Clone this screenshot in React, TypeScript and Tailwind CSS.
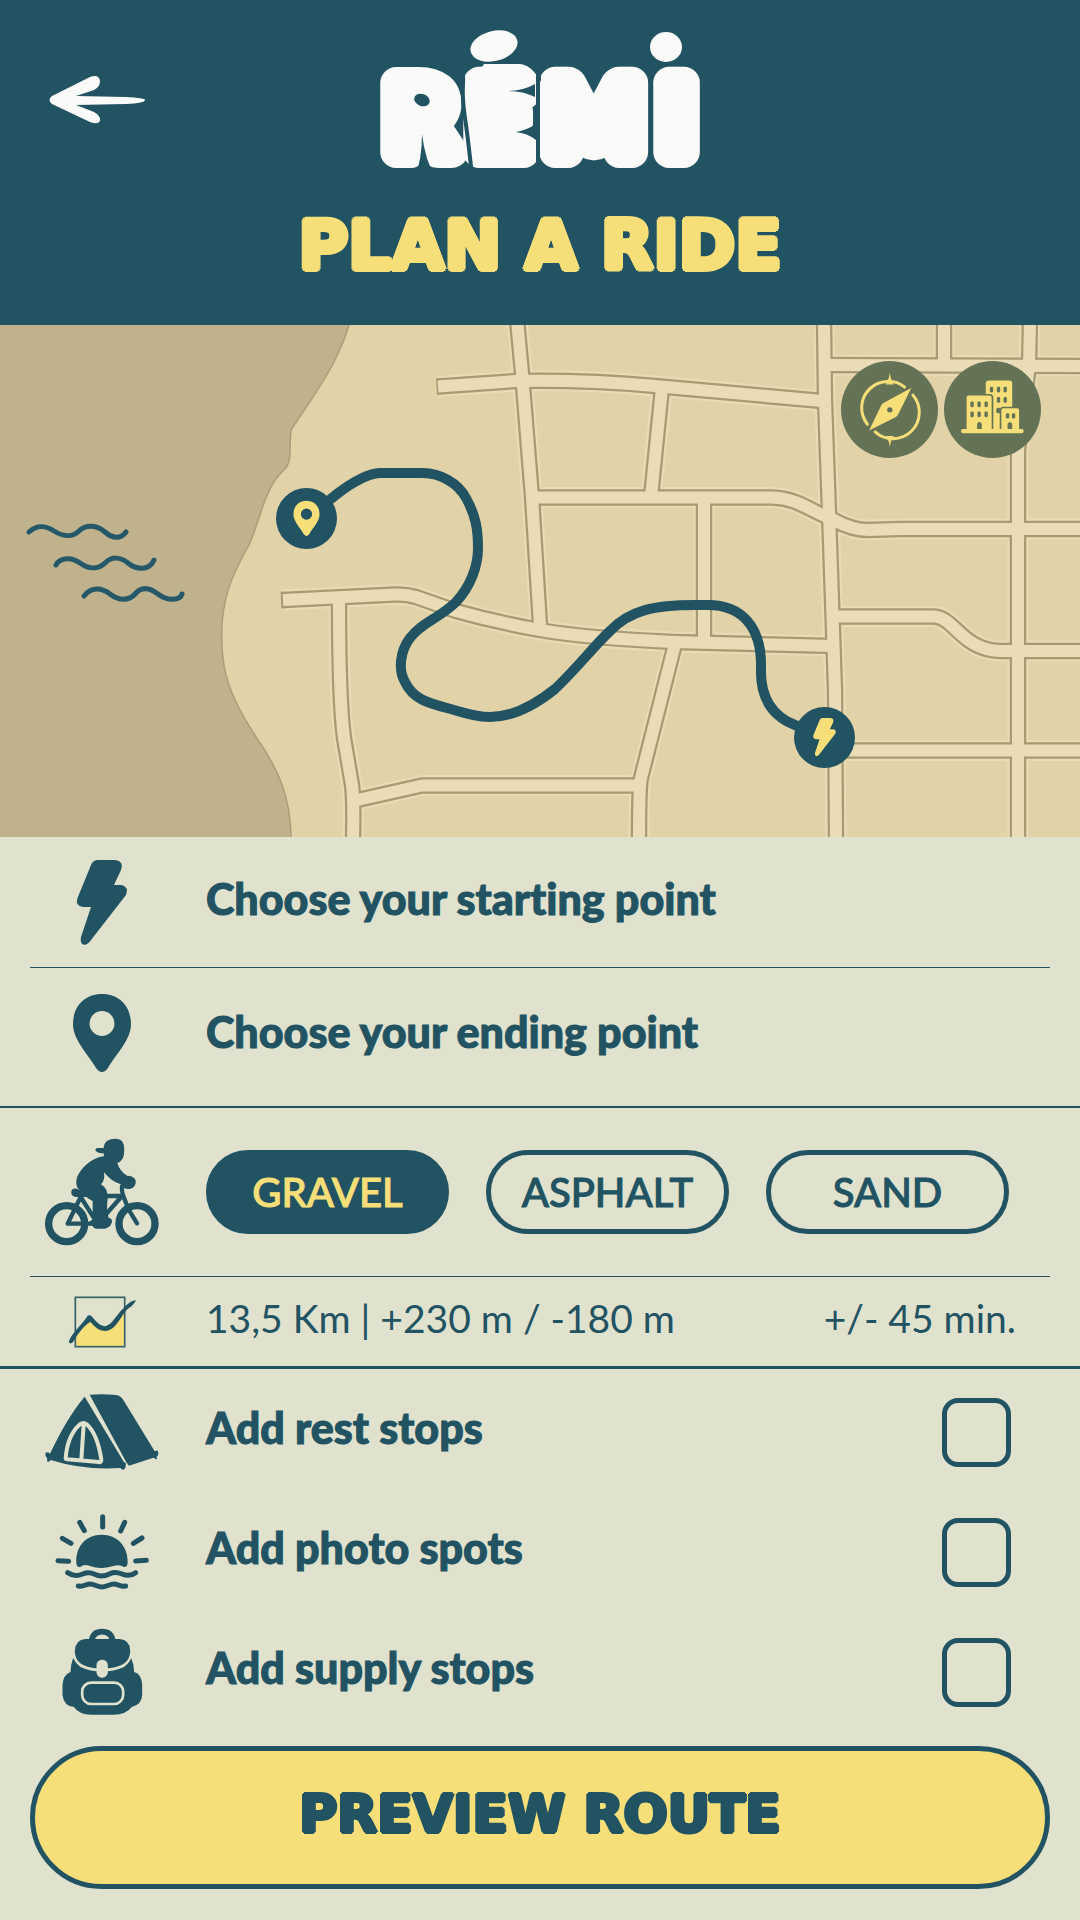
import { useState } from "react";
import type { ReactNode } from "react";

const BOLT =
  "M98 860H115Q124 861 121 870L114 885H122Q129 887 126 895L91 940Q87 946 83 944.500Q80 943 81 937L91 907H83Q75 906 77.500 898L91 865Q93 860 98 860Z";
const PIN =
  "M102 993C84 993 73 1006 73 1023C73 1039 88 1053 96 1067Q102 1075 108 1067C116 1053 131 1039 131 1023C131 1006 120 993 102 993ZM102 1010A12.500 12.500 0 1 1 102 1035A12.500 12.500 0 1 1 102 1010Z";

const ROADS = [
  "M517 320L522 373L532 497L540 625",
  "M438 386.500L516 381Q590 380 655 386L822 401",
  "M824 320L825 400L829 512L833 630L835 690L836 840",
  "M825 365L1085 366",
  "M944 320V365",
  "M1030 320L1029 366L1018 450V840",
  "M532 497.500H772C798 498 812 512 834 520Q852 530 868 530L900 529H1085",
  "M662 388L651 497",
  "M704 497V642",
  "M283 600L395 594.500Q406 594 416 597L456 611Q495 622 540 630T674 642L834 646",
  "M339 602Q339 700 344 738L352 785Q354 800 353 840",
  "M353 801L422 785.500H640",
  "M675 644L641 778Q639 786 639 840",
  "M836 616.500H934C954 617 962 650 1000 651H1085",
  "M836 750.500H1085",
];

function Logo() {
  return (
    <svg viewBox="0 0 330 160" className="h-40 w-[330px]" role="img" aria-label="Rémi">
      <text
        x="14 97 173 287"
        y="130"
        fontFamily="Lato, sans-serif"
        fontWeight="900"
        fontSize="96"
        fill="#fafaf8"
        stroke="#fafaf8"
        strokeWidth="32"
        strokeLinejoin="round"
        strokeLinecap="round"
      >
        RÉMI
      </text>
      <g fill="#215363">
        <path d="M84 0H166V60Q156 42 144 42H100Q92 42 84 52Z" />
        <ellipse cx="47" cy="78" rx="8" ry="6" transform="rotate(20 47 78)" />
        <path d="M40 154Q47 138 47 112Q50 138 60 154Z" />
        <path d="M132 69Q148 69 160 62V75Q148 69 132 69Z" />
        <path d="M141 110Q152 108 161 102V118Q152 111 141 110Z" />
      </g>
      <g fill="none" stroke="#215363" strokeWidth="4">
        <path d="M84 44Q89 46 88 62Q87 76 90 96T97 154" />
        <path d="M163 40V154" />
      </g>
      <ellipse cx="119" cy="24" rx="24" ry="15" transform="rotate(-14 119 24)" fill="#fafaf8" />
      <ellipse cx="291" cy="25" rx="16" ry="15" fill="#fafaf8" />
    </svg>
  );
}

function RouteMap() {
  return (
    <svg
      viewBox="0 325 1080 512"
      preserveAspectRatio="xMidYMid slice"
      className="block h-full w-full"
      role="img"
      aria-label="Route map"
    >
      <rect y="320" width="1080" height="520" fill="#e2d2a8" />
      <path
        d="M-5 315H352Q346 338 336 358C322 386 304 410 291 430Q290 440 290 452Q290 462 286 468C273 480 270 488 264 503C258 520 254 535 248 547C236 568 228 585 225 603C220 625 221 655 226 675C232 698 244 718 256 737C278 768 292 798 291 845H-5Z"
        fill="#bfb28c"
        stroke="#a99f78"
        strokeWidth="1.500"
      />
      <g fill="none" strokeLinejoin="round">
        <g stroke="#e9dbb4" strokeWidth="21">
          {ROADS.map((d) => <path key={d} d={d} />)}
        </g>
        <g stroke="#a69b72" strokeWidth="16.500">
          {ROADS.map((d) => <path key={d} d={d} />)}
          <path d="M436.500 386.600L440 386.400M281 600.100L285 599.900" />
        </g>
        <g stroke="#eadcb7" strokeWidth="12">
          {ROADS.map((d) => <path key={d} d={d} />)}
        </g>
      </g>
      <g fill="none" stroke="#215363" strokeLinecap="round" strokeLinejoin="round">
        <g strokeWidth="5" stroke="#255868">
          <path d="M29 532C38 524 46 526 54 531S72 538 79 531S97 525 105 532S121 539 126 532" />
          <path d="M56 565C60 557 72 557 80 563S98 570 105 563S121 557 128 563S149 572 154 560" />
          <path d="M84 596C91 587 101 587 110 594S129 601 135 594S149 587 158 594S180 601 182 594" />
        </g>
        <path
          strokeWidth="10"
          d="M307 518L337 494Q363 474 380 473H423C440 473 458 483 466 498C476 516 478 530 478 548C478 567 470 587 456 602C440 618 422 622 410 638C400 651 398 670 405 682C413 699 428 703 447 708C465 713 476 717 490 717C514 717 535 705 555 689C580 665 592 648 610 631C630 610 655 605 695 605H708C740 605 762 625 761 668C760 698 772 716 795 725L825 737"
        />
      </g>
      <circle cx="306.500" cy="518.500" r="30.500" fill="#215363" />
      <path d={PIN} fill="#f6df79" transform="translate(260.600 54) scale(.45)" />
      <circle cx="824.500" cy="737.500" r="30.500" fill="#215363" />
      <path d={BOLT} fill="#f6df79" transform="translate(778.600 331) scale(.45)" />
    </svg>
  );
}

function CompassIcon() {
  return (
    <svg viewBox="33 33 290 290" className="h-full w-full" aria-hidden="true">
      <g fill="none" stroke="#f6df79" strokeWidth="9" strokeLinecap="round">
        <path d="M223 111A79 79 0 0 0 112 222" />
        <path d="M248 135A79 79 0 0 1 135 245" />
      </g>
      <g fill="#f6df79">
        <path d="M179 68Q182 90 191 103H167Q176 90 179 68Z" />
        <path d="M179 289Q176 268 167 257H191Q182 268 179 289Z" />
        <path d="M243 114L205 191Q202 198 196 201L117 241L152 168Q155 161 161 158Z" />
      </g>
      <circle cx="179" cy="179" r="8" fill="#5f6f52" />
    </svg>
  );
}

function CityIcon() {
  return (
    <svg viewBox="342 33 290 290" className="h-full w-full" aria-hidden="true">
      <rect x="467" y="91" width="79" height="150" rx="9" fill="#f6df79" />
      <g fill="#647355">
        {[484, 505, 525].map((x) => <rect key={x} x={x - 5} y="110" width="10" height="17" rx="4" />)}
        {[505, 525].map((x) => <rect key={x} x={x - 5} y="141" width="10" height="17" rx="4" />)}
        <rect x="498" y="173" width="15" height="16" rx="6" />
      </g>
      <g fill="#f6df79" stroke="#647355" strokeWidth="5">
        <rect x="407" y="134" width="80" height="112" rx="9" />
        <rect x="511" y="172" width="58" height="74" rx="8" />
      </g>
      <g fill="#647355">
        {[426, 447, 468].map((x) => (
          <g key={x}>
            <rect x={x - 5} y="154" width="10" height="17" rx="4" />
            <rect x={x - 5} y="184" width="10" height="17" rx="4" />
          </g>
        ))}
        <path d="M441 237V224Q441 215 448 215T455 224V237Z" />
        <rect x="527" y="189" width="10" height="16" rx="4" />
        <rect x="545" y="189" width="10" height="16" rx="4" />
        <path d="M532 237V224Q532 216 539 216T546 224V237Z" />
      </g>
      <rect x="393" y="236" width="187" height="13" rx="6" fill="#f6df79" />
    </svg>
  );
}

function BoltIcon() {
  return (
    <svg viewBox="72 855 60 95" className="h-[95px] w-[60px]" fill="currentColor" aria-hidden="true">
      <path d={BOLT} />
    </svg>
  );
}

function PinIcon() {
  return (
    <svg viewBox="72 992 60 80" className="h-20 w-[60px]" fill="currentColor" aria-hidden="true">
      <path d={PIN} fillRule="evenodd" />
    </svg>
  );
}

function BikeIcon() {
  return (
    <svg viewBox="42 52 348 330" className="h-[110px] w-[116px]" aria-hidden="true">
      <g fill="none" stroke="currentColor" strokeLinecap="round" strokeLinejoin="round">
        <circle cx="110" cy="312" r="54" strokeWidth="22" />
        <circle cx="321" cy="312" r="54" strokeWidth="22" />
        <g strokeWidth="13">
          <path d="M195 312H113L152 232L195 300" />
          <path d="M225 229H276L226 286" />
          <path d="M276 200Q274 215 280 229L295 268L321 311" />
        </g>
      </g>
      <g fill="currentColor">
        <path d="M125 211Q134 203 146 210L174 214V232H136Q120 228 125 211Z" />
        <path d="M222 110C188 112 148 148 140 178C136 196 142 210 156 214Q166 234 188 244V300Q176 304 178 314Q182 318 188 318Q190 327 202 327H226Q246 320 246 304Q246 297 236 294Q228 270 233 238Q236 208 213 194Q226 182 222 158Q244 186 272 194Q280 210 300 208Q320 202 317 182Q312 168 291 168Q270 156 262 130Q278 126 282 104Q286 70 272 61Q252 52 232 63Q222 70 221 85H202Q194 88 197 93Q204 101 221 101Z" />
      </g>
    </svg>
  );
}

function ElevationIcon() {
  return (
    <svg viewBox="110 525 212 160" className="h-[53px] w-[71px]" aria-hidden="true">
      <path d="M133 655L178 600C190 610 205 630 225 630C250 625 262 595 283 574V681H133Z" fill="#f6df79" />
      <rect x="134" y="532" width="149" height="149" fill="none" stroke="#386067" strokeWidth="5" />
      <path
        d="M114 667C122 640 152 618 172 587L180 586C194 600 204 618 224 619C246 614 256 586 280 564Q300 542 317 541Q312 554 296 564C270 584 262 630 224 634C204 634 192 620 179 606C160 618 140 644 128 666Q118 676 114 667Z"
        fill="currentColor"
      />
    </svg>
  );
}

function TentIcon() {
  return (
    <svg viewBox="42 68 348 234" className="h-[78px] w-[116px]" aria-hidden="true">
      <g fill="currentColor">
        <path d="M164 79L282 276Q290 274 287 288Q284 302 275 297L271 293Q160 300 62 269Q58 276 52 274L51 262Q44 257 47 247Q54 244 60 250Q112 140 164 79Z" />
        <path d="M179 73Q220 70 258 74Q272 76 280 89L374 243Q385 236 385 250Q384 258 379 260Q384 266 378 267L370 262L297 286L289 276Z" />
      </g>
      <path
        d="M107 264Q112 195 150 162Q160 154 170 162Q202 190 214 268Q214 277 206 275L112 267Q107 267 107 264ZM161 164L154 268"
        fill="none"
        stroke="#e0e2cd"
        strokeWidth="12"
      />
    </svg>
  );
}

function SunIcon() {
  return (
    <svg viewBox="72 430 288 234" className="h-[78px] w-24" aria-hidden="true">
      <path
        d="M139 578C137 530 168 495 215 495S294 530 293 578Q293 595 280 591Q265 584 250 589T217 595T180 589T152 591Q139 595 139 578Z"
        fill="currentColor"
      />
      <g fill="none" stroke="currentColor" strokeWidth="15" strokeLinecap="round">
        <path d="M84 573L116 575M97 506L123 521M149 458L163 483M218 441V472M284 458L272 484M336 505L310 521M317 574L349 572" />
        <path d="M113 609C130 621 146 618 158 613S180 607 194 614S226 619 240 612S264 608 276 613S304 619 317 609" />
        <path d="M145 649C162 652 168 643 180 643S204 652 216 652S240 643 252 643S272 652 287 649" />
      </g>
    </svg>
  );
}

function BackpackIcon() {
  return (
    <svg viewBox="92 774 248 264" className="h-[88px] w-[83px]" aria-hidden="true">
      <path d="M183 812Q188 785 215 785T247 812" fill="none" stroke="currentColor" strokeWidth="17" />
      <path
        d="M128 864Q135 880 150 891Q180 905 215 905T280 891Q296 880 302 864Q310 882 311 906Q334 912 335 945V975Q334 1004 304 1011Q286 1034 250 1034H182Q146 1034 130 1011Q100 1008 96 975V945Q98 914 120 906Q121 882 128 864Z"
        fill="currentColor"
      />
      <path d="M165 807H267Q299 810 299 842C299 882 264 895 215 895S133 882 133 842Q134 810 165 807Z" fill="currentColor" />
      <rect x="198" y="869" width="34" height="54" rx="16" fill="#e0e2cd" />
      <rect x="155" y="938" width="123" height="64" rx="27" fill="none" stroke="#e0e2cd" strokeWidth="8" />
    </svg>
  );
}

function IconCell({ children }: { children: ReactNode }) {
  return <span className="mr-8 flex w-36 shrink-0 items-center justify-center">{children}</span>;
}

const SURFACES = ["GRAVEL", "ASPHALT", "SAND"];
const STOPS = [
  { id: "rest", label: "Add rest stops", icon: <TentIcon /> },
  { id: "photo", label: "Add photo spots", icon: <SunIcon /> },
  { id: "supply", label: "Add supply stops", icon: <BackpackIcon /> },
];

export default function App() {
  const [surface, setSurface] = useState("GRAVEL");

  return (
    <div className="min-h-screen bg-[#e0e2cd] font-['Lato',sans-serif] text-[#215363] [font-variant-ligatures:none]">
      <header className="relative flex h-[325px] flex-col items-center bg-[#215363] pt-[22px]">
        <button type="button" aria-label="Back" className="absolute top-[72px] left-12">
          <svg viewBox="0 0 100 56" className="h-14 w-[100px]" fill="#fafaf8" aria-hidden="true">
            <path d="M4 24L42 5Q51 2 52 9Q52 15 46 18L28 24L78 25Q97 26 97 28Q97 31 78 32L28 33L46 40Q53 44 52 49Q50 53 42 50L4 32Q-1 28 4 24Z" />
          </svg>
        </button>
        <Logo />
        <h1 className="mt-3.5 font-['DejaVu_Sans',sans-serif] text-[68px] leading-[100px] font-bold text-[#f6df79] [text-shadow:3px_0_#f6df79,-3px_0_#f6df79,0_3px_#f6df79,0_-3px_#f6df79,2px_2px_#f6df79,-2px_2px_#f6df79,2px_-2px_#f6df79,-2px_-2px_#f6df79]">
          PLAN A RIDE
        </h1>
      </header>

      <section className="relative h-[512px]">
        <RouteMap />
        <div className="absolute top-9 right-[39px] flex gap-1.5">
          <button type="button" aria-label="Compass" className="size-[97px] rounded-full bg-[#647355]">
            <CompassIcon />
          </button>
          <button type="button" aria-label="City" className="size-[97px] rounded-full bg-[#647355]">
            <CityIcon />
          </button>
        </div>
      </section>

      <main>
        <section className="border-b-2 border-[#215363] px-[30px]">
          <button type="button" className="flex h-[131px] w-full items-center border-b border-[#215363] text-left text-[43px] font-black [-webkit-text-stroke:1px_#215363]">
            <IconCell><BoltIcon /></IconCell>
            <span className="pb-1.5">Choose your starting point</span>
          </button>
          <button type="button" className="flex h-[138px] w-full items-center pb-2 text-left text-[43px] font-black [-webkit-text-stroke:1px_#215363]">
            <IconCell><PinIcon /></IconCell>
            <span className="pb-0.5">Choose your ending point</span>
          </button>
        </section>

        <section className="border-b-[3px] border-[#215363] px-[30px]">
          <div className="flex h-[169px] items-center border-b border-[#215363] pr-[41px]">
            <IconCell><BikeIcon /></IconCell>
            <div className="grid flex-1 grid-cols-3 gap-[37px]">
              {SURFACES.map((name) => (
                <button
                  key={name}
                  type="button"
                  aria-pressed={surface === name}
                  onClick={() => setSurface(name)}
                  className={
                    surface === name
                      ? "h-[84px] rounded-full border-[5px] border-[#215363] bg-[#215363] text-[40px] font-medium text-[#f6df79] [-webkit-text-stroke:1px_#f6df79]"
                      : "h-[84px] rounded-full border-[5px] border-[#215363] text-[40px] font-medium [-webkit-text-stroke:1px_#215363]"
                  }
                >
                  {name}
                </button>
              ))}
            </div>
          </div>
          <div className="flex h-[89px] items-center pr-[34px] text-[39px]">
            <IconCell><ElevationIcon /></IconCell>
            <span className="flex-1 pb-1.5">13,5 Km | +230 m / -180 m</span>
            <span className="pb-1.5">+/- 45 min.</span>
          </div>
        </section>

        <section className="px-[30px] pt-[3px]">
          {STOPS.map((stop) => (
            <div key={stop.id} className="flex h-[120px] items-center pr-[39px] text-[43px] font-black">
              <IconCell>{stop.icon}</IconCell>
              <label htmlFor={stop.id} className="flex-1 pb-2 [-webkit-text-stroke:1px_#215363]">{stop.label}</label>
              <input
                id={stop.id}
                type="checkbox"
                className="size-[69px] appearance-none rounded-2xl border-[5px] border-[#215363] checked:bg-[#215363]"
              />
            </div>
          ))}
        </section>

        <div className="px-[30px] pt-3.5 pb-[30px]">
          <button
            type="button"
            className="h-[143px] w-full rounded-full border-[5px] border-[#215363] bg-[#f6df79] pb-2 font-['DejaVu_Sans',sans-serif] text-[52px] font-bold [text-shadow:2px_0_#215363,-2px_0_#215363,0_2px_#215363,0_-2px_#215363,1px_1px_#215363,-1px_1px_#215363,1px_-1px_#215363,-1px_-1px_#215363]"
          >
            PREVIEW ROUTE
          </button>
        </div>
      </main>
    </div>
  );
}
